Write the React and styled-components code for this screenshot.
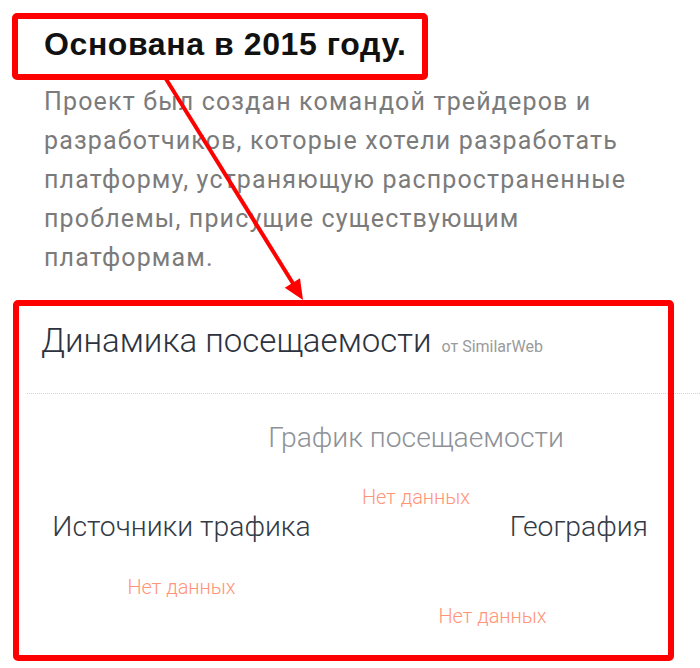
import React from "react";
import styled, { createGlobalStyle } from "styled-components";

const GlobalStyle = createGlobalStyle`
  html, body { margin: 0; padding: 0; background: #ffffff; }
  body { font-family: Roboto, "Noto Sans", "Liberation Sans", sans-serif; }
`;

const Page = styled.div`
  position: relative;
  width: 700px;
  height: 668px;
  overflow: hidden;
  background: #ffffff;
`;

const About = styled.section`
  padding: 28px 0 0 44px;
`;

const Heading = styled.h1`
  margin: 0;
  font-family: "Liberation Sans", Arial, sans-serif;
  font-weight: 700;
  font-size: 32px;
  line-height: 1;
  letter-spacing: 0.6px;
  color: #111111;
`;

const Paragraph = styled.p`
  margin: 22px 0 0;
  width: 615px;
  font-family: Roboto, "Liberation Sans", sans-serif;
  font-weight: 400;
  font-size: 25px;
  line-height: 39px;
  letter-spacing: 1.15px;
  color: #7b7b7b;
`;

const Card = styled.section`
  margin-top: 47px;
`;

const CardHeader = styled.div`
  padding-left: 41px;
  display: flex;
  align-items: baseline;
  gap: 10px;
`;

const CardTitle = styled.h2`
  margin: 0;
  font-weight: 300;
  font-size: 33px;
  line-height: 1;
  color: #2c333e;
`;

const Source = styled.span`
  font-weight: 400;
  font-size: 16px;
  color: #9a9a9a;
`;

const Divider = styled.hr`
  margin: 36px 0 0 27px;
  border: 0;
  border-top: 1px dotted #cfd6dc;
  height: 0;
`;

const CardBody = styled.div`
  padding: 0 52px 0 26px;
`;

const Block = styled.div`
  display: flex;
  flex-direction: column;
  align-items: ${(p) => p.$titleAlign || "center"};
  padding-left: ${(p) => p.$indent || 0}px;
  margin-top: ${(p) => p.$top || 0}px;
`;

const BlockTitle = styled.h3`
  margin: 0;
  font-weight: 300;
  font-size: 28.3px;
  line-height: 1;
  color: ${(p) => (p.$muted ? "#8e9297" : "#333a45")};
`;

const NoData = styled.div`
  align-self: center;
  margin-top: ${(p) => p.$gap}px;
  font-weight: 300;
  font-size: 20px;
  line-height: 1;
  color: #ff9478;
`;

const Row = styled.div`
  display: grid;
  grid-template-columns: 1fr 1fr;
`;

const Annotations = styled.svg`
  position: absolute;
  left: 0;
  top: 0;
  pointer-events: none;
`;

export default function App() {
  return (
    <>
      <GlobalStyle />
      <Page>
        <About>
          <Heading>Основана в 2015 году.</Heading>
          <Paragraph>
            Проект был создан командой трейдеров и разработчиков, которые
            хотели разработать платформу, устраняющую распространенные
            проблемы, присущие существующим платформам.
          </Paragraph>
        </About>
        <Card>
          <CardHeader>
            <CardTitle>Динамика посещаемости</CardTitle>
            <Source>от SimilarWeb</Source>
          </CardHeader>
          <Divider />
          <CardBody>
            <Block $indent={158} $top={30}>
              <BlockTitle $muted>График посещаемости</BlockTitle>
              <NoData $gap={35}>Нет данных</NoData>
            </Block>
            <Row>
              <Block $top={6}>
                <BlockTitle>Источники трафика</BlockTitle>
                <NoData $gap={35}>Нет данных</NoData>
              </Block>
              <Block $top={6} $titleAlign="flex-end">
                <BlockTitle>География</BlockTitle>
                <NoData $gap={64}>Нет данных</NoData>
              </Block>
            </Row>
          </CardBody>
        </Card>
        <Annotations width="700" height="668" viewBox="0 0 700 668">
          <rect x="15" y="16" width="410" height="61" rx="2" fill="none" stroke="#ff0000" strokeWidth="6" />
          <rect x="16" y="303" width="655" height="355" rx="2" fill="none" stroke="#ff0000" strokeWidth="6" />
          <line x1="166" y1="79" x2="294" y2="285" stroke="#ff0000" strokeWidth="4" />
          <polygon points="303,300 284.8,287.8 300,278.2" fill="#ff0000" />
        </Annotations>
      </Page>
    </>
  );
}
